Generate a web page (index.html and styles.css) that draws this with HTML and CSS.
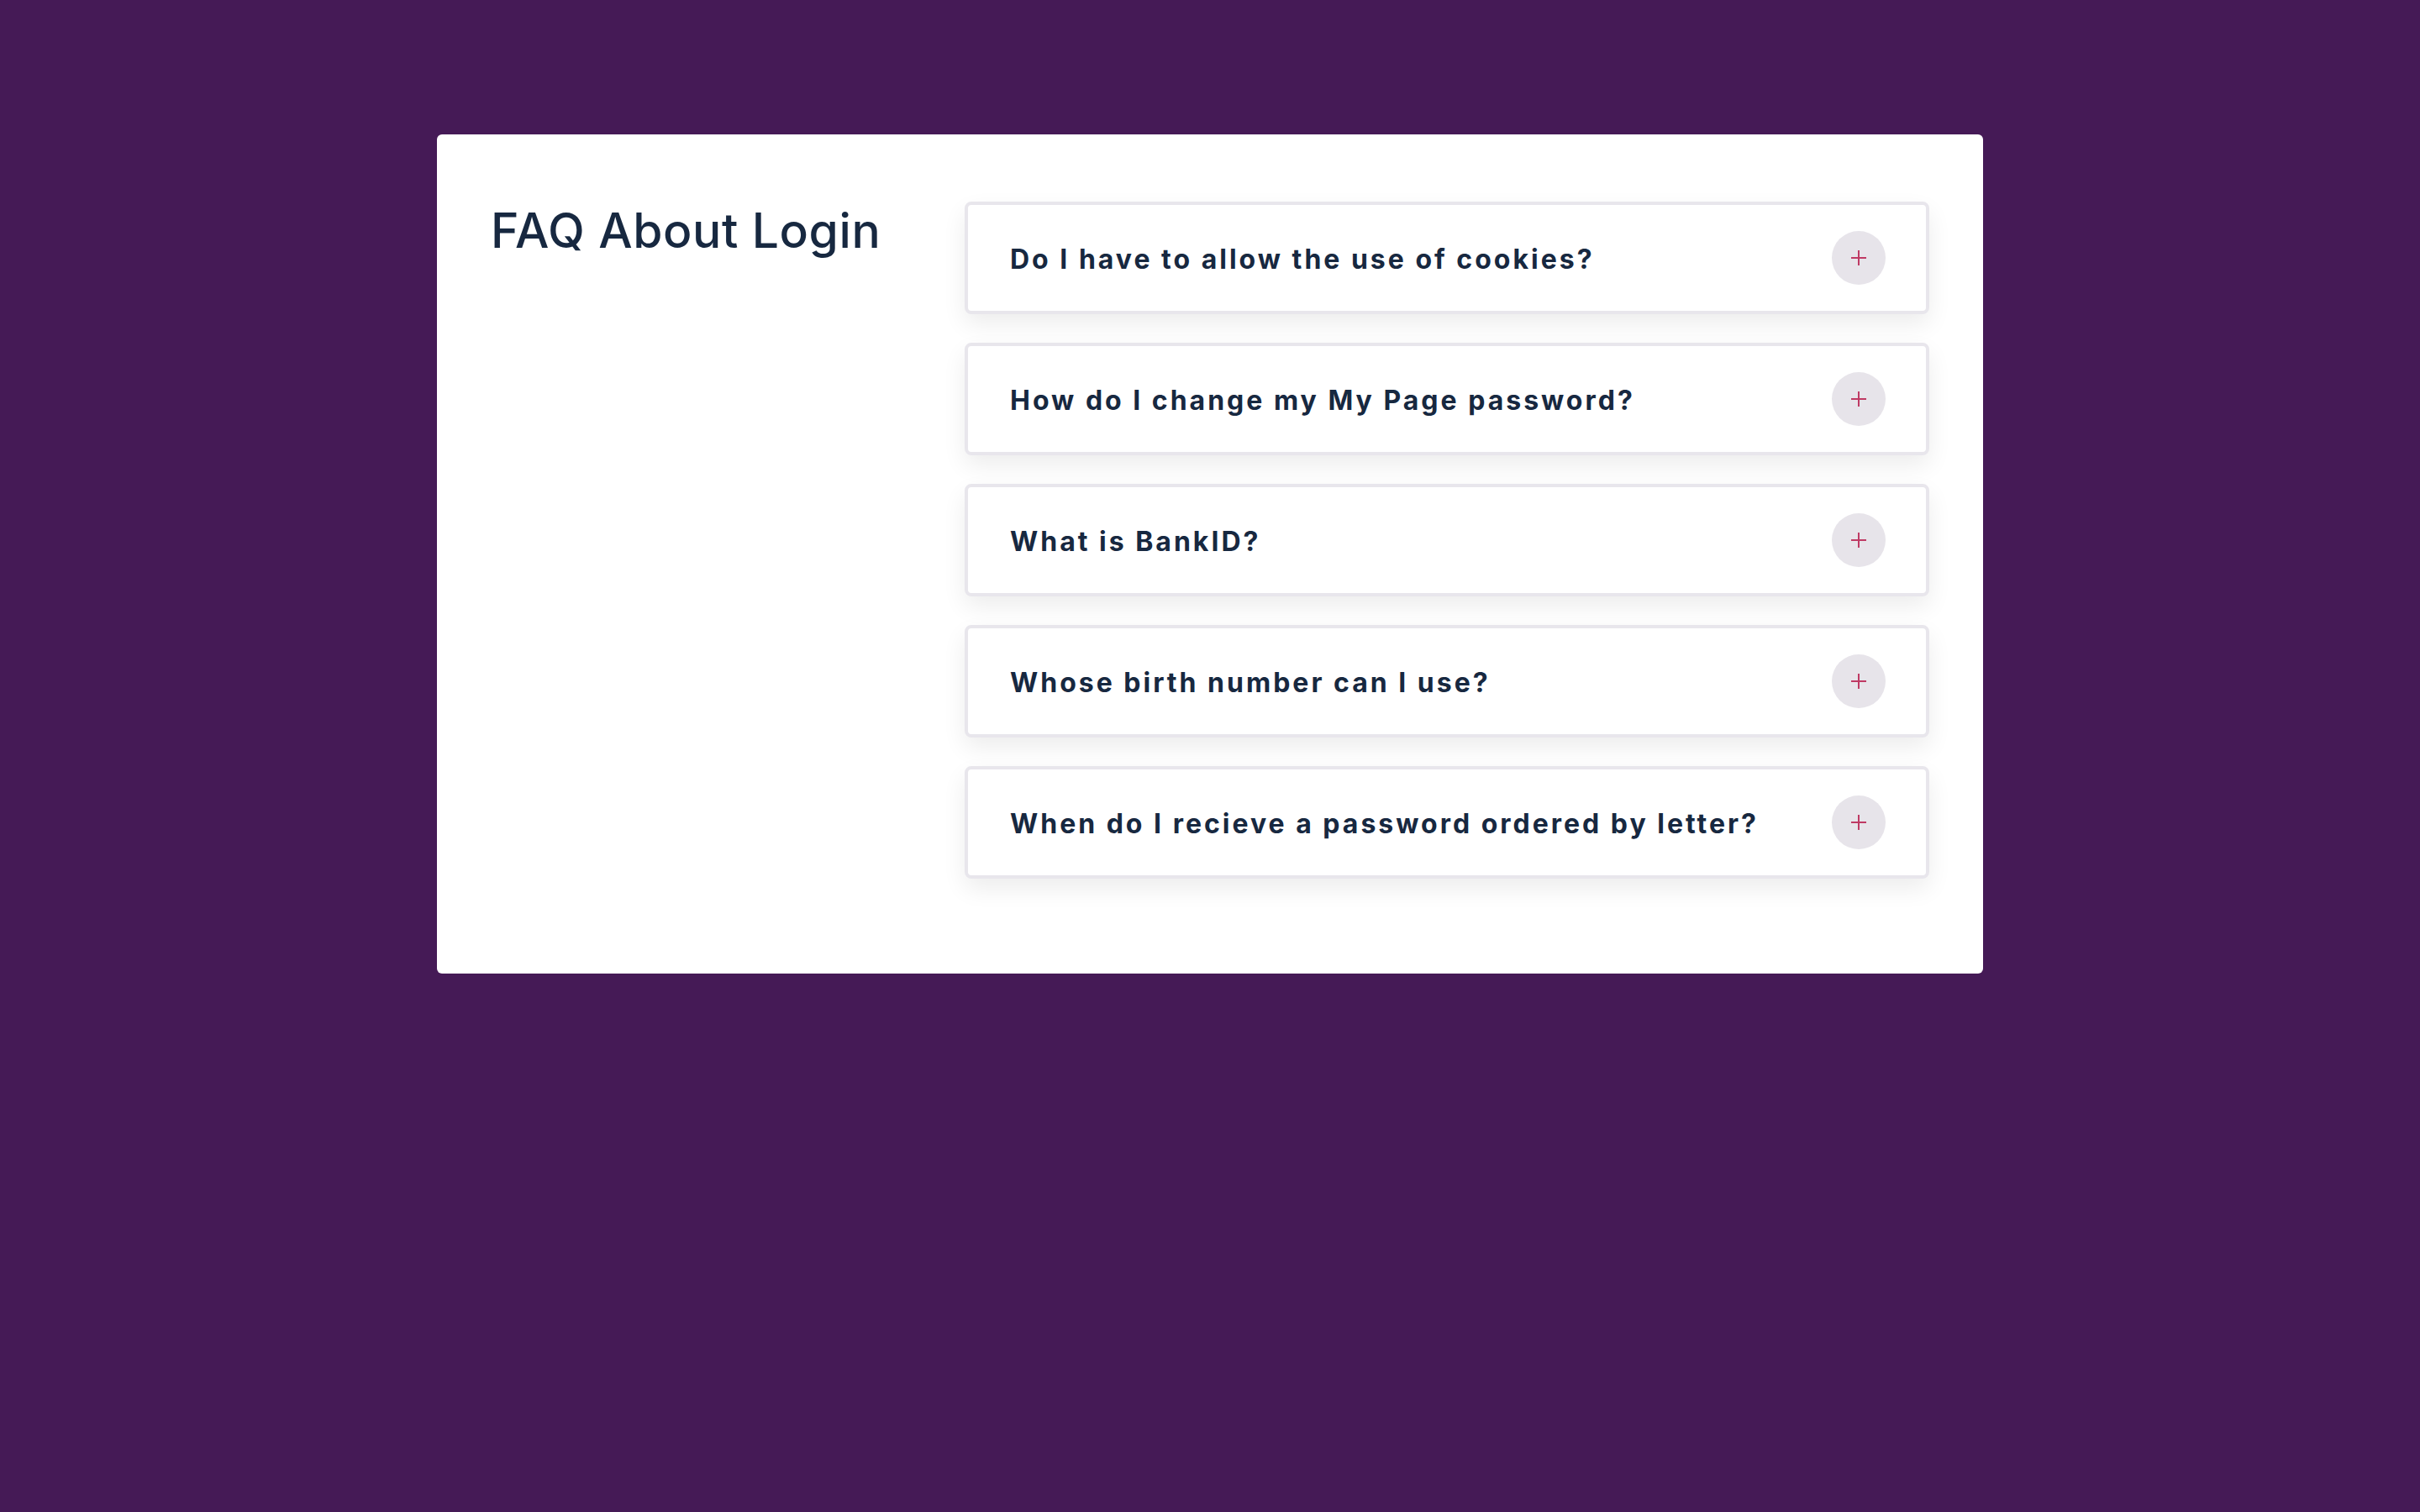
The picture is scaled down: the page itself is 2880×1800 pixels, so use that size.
FILE: index.html
```html
<!DOCTYPE html>
<html lang="en">
<head>
<meta charset="utf-8">
<title>FAQ About Login</title>
<link rel="stylesheet" href="styles.css">
</head>
<body>
<main class="card">
  <h1 class="title">FAQ About Login</h1>
  <div class="faq-list">
    <div class="faq-item">
      <span class="question">Do I have to allow the use of cookies?</span>
      <span class="toggle"><span class="plus"></span></span>
    </div>
    <div class="faq-item">
      <span class="question">How do I change my My Page password?</span>
      <span class="toggle"><span class="plus"></span></span>
    </div>
    <div class="faq-item">
      <span class="question">What is BankID?</span>
      <span class="toggle"><span class="plus"></span></span>
    </div>
    <div class="faq-item">
      <span class="question">Whose birth number can I use?</span>
      <span class="toggle"><span class="plus"></span></span>
    </div>
    <div class="faq-item">
      <span class="question">When do I recieve a password ordered by letter?</span>
      <span class="toggle"><span class="plus"></span></span>
    </div>
  </div>
</main>
</body>
</html>
```
FILE: styles.css
```css
html, body {
  margin: 0;
  padding: 0;
}
body {
  background: #451a56;
  font-family: Inter, "Noto Sans", "Liberation Sans", sans-serif;
  color: #172840;
  min-height: 1800px;
  padding-top: 160px;
  box-sizing: border-box;
}
.card {
  width: 1840px;
  margin: 0 auto;
  background: #ffffff;
  border-radius: 6px;
  box-sizing: border-box;
  padding: 80px 64px 113px 64px;
  display: flex;
}
.title {
  margin: 0;
  width: 564px;
  flex: none;
  font-size: 57px;
  font-weight: 500;
  line-height: normal;
  letter-spacing: 0.6px;
  color: #172840;
}
.faq-list {
  flex: 1;
  display: flex;
  flex-direction: column;
  gap: 34px;
}
.faq-item {
  height: 134px;
  box-sizing: border-box;
  border: 4px solid #e8e6ec;
  border-radius: 8px;
  background: #fff;
  box-shadow: 0 12px 28px rgba(0, 0, 0, 0.075);
  display: flex;
  align-items: center;
  justify-content: space-between;
  padding: 0 48px 0 50px;
}
.question {
  font-size: 32px;
  font-weight: 700;
  letter-spacing: 3px;
  color: #172840;
  margin-top: 3px;
}
.toggle {
  width: 64px;
  height: 64px;
  border-radius: 50%;
  background: #e7e4ea;
  display: flex;
  align-items: center;
  justify-content: center;
  flex: none;
}
.plus {
  position: relative;
  width: 18px;
  height: 18px;
}
.plus::before,
.plus::after {
  content: "";
  position: absolute;
  background: #bf3a64;
}
.plus::before {
  left: 0;
  right: 0;
  top: 8px;
  height: 2px;
}
.plus::after {
  top: 0;
  bottom: 0;
  left: 8px;
  width: 2px;
}
```
